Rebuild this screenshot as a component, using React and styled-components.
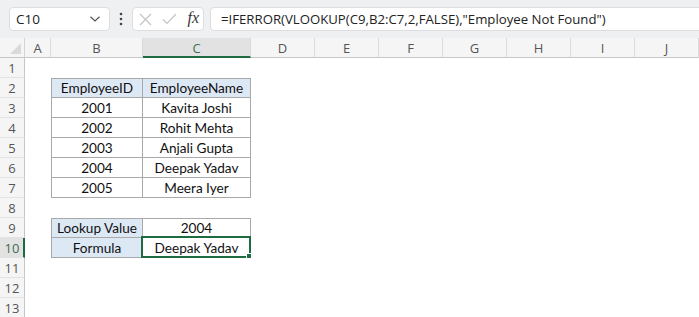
import React from "react";
import styled, { createGlobalStyle } from "styled-components";

const Global = createGlobalStyle`
  html, body { margin: 0; padding: 0; background: #fff; }
  body { width: 699px; height: 317px; overflow: hidden; }
`;

const Page = styled.div`
  width: 699px;
  height: 317px;
  overflow: hidden;
  display: flex;
  flex-direction: column;
  background: #fff;
`;

const Toolbar = styled.div`
  height: 38px;
  flex: none;
  background: #eff0f2;
  display: flex;
  align-items: center;
  padding: 0 0 0 9px;
  box-sizing: border-box;
  overflow: hidden;
`;

const Box = styled.div`
  height: 24px;
  box-sizing: border-box;
  background: #fff;
  border: 1px solid #dcdde0;
  border-radius: 4px;
  display: flex;
  align-items: center;
  font-family: "Open Sans", "Noto Sans", sans-serif;
  font-size: 13.5px;
  color: #222;
`;

const NameBox = styled(Box)`
  width: 101px;
  padding: 0 8px 0 6px;
  justify-content: space-between;
`;

const Dots = styled.div`
  width: 22px;
  display: flex;
  justify-content: center;
`;

const FxBox = styled(Box)`
  width: 72px;
  padding: 0 4px 0 6px;
  justify-content: space-between;
`;

const Fx = styled.span`
  font-family: "Liberation Serif", "DejaVu Serif", serif;
  font-style: italic;
  font-size: 16px;
  color: #333;
  padding-bottom: 2px;
`;

const FormulaBox = styled(Box)`
  flex: 1;
  margin-left: 6px;
  margin-right: -12px;
  padding-left: 10px;
  font-size: 13.2px;
  white-space: nowrap;
`;

const Grid = styled.div`
  display: grid;
  grid-template-columns: 25px 26px 92px 108px repeat(7, 64px);
  grid-auto-rows: 20px;
  font-family: "Lato", "Liberation Sans", sans-serif;
`;

const Corner = styled.div`
  background: #f5f5f5;
  border-right: 1px solid #d4d4d4;
  border-bottom: 1px solid #c6c6c6;
  box-sizing: border-box;
  position: relative;
  &::after {
    content: "";
    position: absolute;
    right: 3px;
    bottom: 3px;
    border-style: solid;
    border-width: 0 0 11px 11px;
    border-color: transparent transparent #dadada transparent;
  }
`;

const ColHead = styled.div`
  box-sizing: border-box;
  background: ${(p) => (p.$active ? "#e2e2e2" : "#f5f5f5")};
  border-right: 1px solid #dadada;
  border-bottom: ${(p) => (p.$active ? "2px solid #1e6b41" : "1px solid #c6c6c6")};
  display: flex;
  align-items: center;
  justify-content: center;
  font-family: "Open Sans", "Noto Sans", sans-serif;
  font-size: 13px;
  color: ${(p) => (p.$active ? "#3e6e52" : "#555")};
  padding-top: ${(p) => (p.$active ? "1px" : "0")};
`;

const RowHead = styled.div`
  box-sizing: border-box;
  background: ${(p) => (p.$active ? "#e2e2e2" : "#f5f5f5")};
  border-right: ${(p) => (p.$active ? "2px solid #1e6b41" : "1px solid #c6c6c6")};
  border-bottom: 1px solid #e3e3e3;
  display: flex;
  align-items: center;
  justify-content: center;
  font-family: "Open Sans", "Noto Sans", sans-serif;
  font-size: 13px;
  color: ${(p) => (p.$active ? "#3e6e52" : "#555")};
  padding-left: ${(p) => (p.$active ? "1px" : "0")};
`;

const Cell = styled.div`
  box-sizing: border-box;
  position: relative;
  display: flex;
  align-items: center;
  justify-content: center;
  font-size: 13.6px;
  color: #111;
  white-space: nowrap;
  background: ${(p) => (p.$fill ? "#dde8f5" : "#fff")};
  border-right: ${(p) => (p.$bordered ? "1px solid #a9a9a9" : "none")};
  border-bottom: ${(p) => (p.$bordered ? "1px solid #a9a9a9" : "none")};
  border-top: ${(p) => (p.$top ? "1px solid #a9a9a9" : "none")};
  border-left: ${(p) => (p.$left ? "1px solid #a9a9a9" : "none")};
  padding-top: ${(p) => (p.$top ? "0" : "1px")};
`;

const Selection = styled.div`
  position: absolute;
  left: -2px;
  top: -2px;
  right: -1px;
  bottom: -1px;
  border: 2px solid #1e6b41;
  pointer-events: none;
  &::after {
    content: "";
    position: absolute;
    right: -5px;
    bottom: -5px;
    width: 6px;
    height: 6px;
    background: #1e6b41;
    border: 1px solid #fff;
  }
`;

const COLS = ["A", "B", "C", "D", "E", "F", "G", "H", "I", "J"];

const tables = {
  2: [
    { t: "EmployeeID", fill: true, top: true },
    { t: "EmployeeName", fill: true, top: true },
  ],
  3: [{ t: "2001" }, { t: "Kavita Joshi" }],
  4: [{ t: "2002" }, { t: "Rohit Mehta" }],
  5: [{ t: "2003" }, { t: "Anjali Gupta" }],
  6: [{ t: "2004" }, { t: "Deepak Yadav" }],
  7: [{ t: "2005" }, { t: "Meera Iyer" }],
  9: [
    { t: "Lookup Value", fill: true, top: true },
    { t: "2004", top: true },
  ],
  10: [{ t: "Formula", fill: true }, { t: "Deepak Yadav", sel: true }],
};

const Chevron = () => (
  <svg width="12" height="8" viewBox="0 0 12 8">
    <path d="M1.5 1.8 L6 6 L10.5 1.8" fill="none" stroke="#555" strokeWidth="1.2" />
  </svg>
);

const VDots = () => (
  <svg width="4" height="14" viewBox="0 0 4 14">
    <circle cx="2" cy="2" r="1.3" fill="#444" />
    <circle cx="2" cy="7" r="1.3" fill="#444" />
    <circle cx="2" cy="12" r="1.3" fill="#444" />
  </svg>
);

const Cross = () => (
  <svg width="13" height="13" viewBox="0 0 13 13">
    <path d="M1 1 L12 12 M12 1 L1 12" stroke="#c4c4c4" strokeWidth="1.2" fill="none" />
  </svg>
);

const Check = () => (
  <svg width="15" height="12" viewBox="0 0 15 12">
    <path d="M1 6.5 L5 10.5 L14 1" stroke="#c4c4c4" strokeWidth="1.2" fill="none" />
  </svg>
);

const Icons = styled.div`
  display: flex;
  align-items: center;
  gap: 10px;
`;

export default function App() {
  const rows = [];
  for (let r = 1; r <= 13; r++) {
    const active = r === 10;
    rows.push(
      <RowHead key={`rh${r}`} $active={active}>
        {r}
      </RowHead>
    );
    COLS.forEach((c) => {
      const data = tables[r];
      if (data && (c === "B" || c === "C")) {
        const d = data[c === "B" ? 0 : 1];
        rows.push(
          <Cell
            key={`${c}${r}`}
            $bordered
            $fill={d.fill}
            $top={d.top}
            $left={c === "B"}
          >
            {d.t}
            {d.sel && <Selection />}
          </Cell>
        );
      } else {
        rows.push(<Cell key={`${c}${r}`} />);
      }
    });
  }

  return (
    <Page>
      <Global />
      <Toolbar>
        <NameBox>
          <span>C10</span>
          <Chevron />
        </NameBox>
        <Dots>
          <VDots />
        </Dots>
        <FxBox>
          <Icons>
            <Cross />
            <Check />
          </Icons>
          <Fx>fx</Fx>
        </FxBox>
        <FormulaBox>=IFERROR(VLOOKUP(C9,B2:C7,2,FALSE),"Employee Not Found")</FormulaBox>
      </Toolbar>
      <Grid>
        <Corner />
        {COLS.map((c) => (
          <ColHead key={c} $active={c === "C"}>
            {c}
          </ColHead>
        ))}
        {rows}
      </Grid>
    </Page>
  );
}
